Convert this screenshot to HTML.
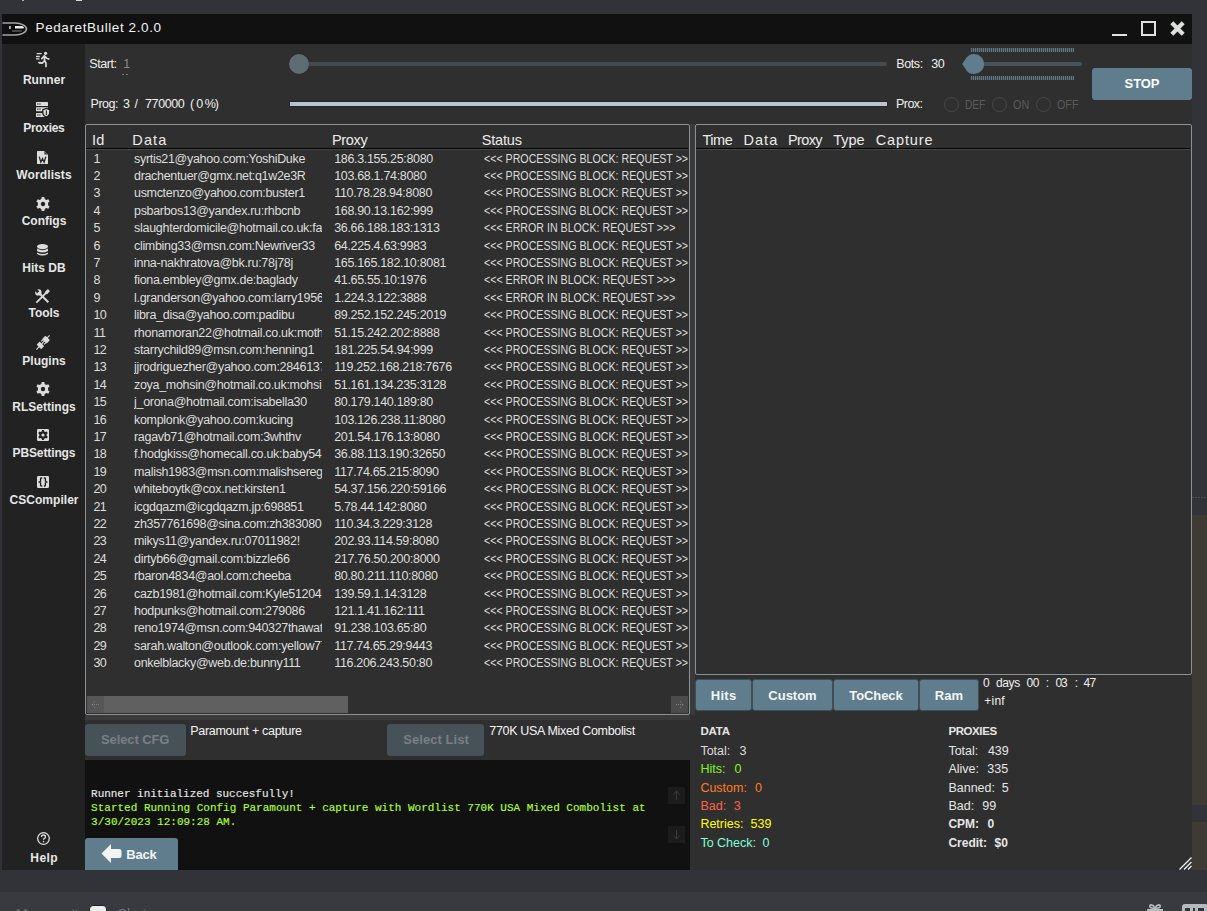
<!DOCTYPE html>
<html><head><meta charset="utf-8"><style>
html,body{margin:0;padding:0}
body{width:1207px;height:911px;overflow:hidden;position:relative;background:#313338;font-family:'Liberation Sans', sans-serif}
</style></head><body>
<div style="position:absolute;left:0px;top:892px;width:1207px;height:19px;z-index:1;background:#383a40"></div>
<div style="position:absolute;left:1192px;top:515px;width:15px;height:290px;z-index:1;background:#3f3b34"></div>
<div style="position:absolute;left:1192px;top:822px;width:15px;height:48px;z-index:1;background:#3f3b34"></div>
<div style="position:absolute;left:2px;top:14px;width:1190px;height:30px;z-index:1;background:#111111"></div>
<div style="position:absolute;left:2px;top:44px;width:83px;height:826px;z-index:1;background:#222222"></div>
<div style="position:absolute;left:85px;top:44px;width:1107px;height:826px;z-index:1;background:#2f2f2f"></div>
<svg style="position:absolute;left:2px;top:19px;z-index:3" width="26" height="20" viewBox="0 0 26 20">
<path d="M8 5.5 L15 5.5 C19.5 5.5 22 8 22 10 C22 12 19.5 14.5 15 14.5 L8 14.5 Z" fill="#0c0c0c"/>
<path d="M10 11 L19 11 C20 11 20.5 12 19.5 12.8 L10 13 Z" fill="#4a4a4a"/>
<path d="M13 7 L20 7 C21.5 7 22 8 21.8 9.6 L13 9.6 Z" fill="#e6e6e6"/>
<rect x="7.2" y="7" width="1.5" height="3" fill="#dddddd"/>
<path d="M0.5 4 L13 4 C19.5 4 24.5 7 24.5 10 C24.5 13 19.5 16 13 16 L0.5 16" fill="none" stroke="#a4a4a4" stroke-width="1.6"/>
</svg>
<div style="position:absolute;left:1112px;top:34px;width:15px;height:2px;z-index:1;background:#dfe2df"></div>
<div style="position:absolute;left:1141px;top:21px;width:15px;height:15px;z-index:1;box-sizing:border-box;border:2px solid #dfe2df"></div>
<svg style="position:absolute;left:1169px;top:20px;z-index:3" width="17" height="17" viewBox="0 0 17 17"><path d="M2.8 2.8 L14.2 14.2 M14.2 2.8 L2.8 14.2" stroke="#dcdfdc" stroke-width="4.2"/></svg>
<svg style="position:absolute;left:36px;top:51px;z-index:3" width="14" height="17" viewBox="0 0 14 17"><g fill="none" stroke="#dcdcdc" stroke-width="1.7" stroke-linecap="round" stroke-linejoin="round"><circle cx="9.6" cy="2.3" r="1.6" fill="#dcdcdc" stroke="none"/><path d="M8.4 5 L8.6 10"/><path d="M8.2 5.2 L5.8 7.6"/><path d="M8.6 5.2 L10.6 7.2 L12.8 8"/><path d="M8.4 10 L6.2 12.2 L3.6 11.8"/><path d="M8.6 10 L10 12 L10 15.4"/><path d="M1.2 2.6 L5.2 2.6 M0.6 5.5 L3.2 5.5 M0.4 7.9 L3 7.9 M2.8 11.5 L4.6 11.5" stroke-width="1.4"/></g></svg>
<svg style="position:absolute;left:36px;top:101px;z-index:3" width="15" height="17" viewBox="0 0 15 17"><g fill="#dcdcdc"><rect x="0" y="1" width="12" height="4" rx="0.6"/><rect x="0" y="6.2" width="12" height="4" rx="0.6"/><rect x="0" y="12" width="12" height="4" rx="0.6"/></g><g fill="#555"><rect x="1.2" y="2.2" width="1.3" height="1.6"/><rect x="3.3" y="2.2" width="1.3" height="1.6"/><rect x="1.2" y="7.4" width="1.3" height="1.6"/><rect x="3.3" y="7.4" width="1.3" height="1.6"/><rect x="1.2" y="13.2" width="1.3" height="1.6"/><rect x="3.3" y="13.2" width="1.3" height="1.6"/></g><path d="M10.3 7.4 L13.8 8.7 L13.8 11.6 C13.8 13.8 12.3 15.3 10.3 16.1 C8.3 15.3 6.8 13.8 6.8 11.6 L6.8 8.7 Z" fill="#dcdcdc" stroke="#1a1a1a" stroke-width="1.3"/><rect x="9.8" y="9.4" width="1.1" height="4.6" fill="#222"/></svg>
<svg style="position:absolute;left:37px;top:151px;z-index:3" width="11" height="13" viewBox="0 0 11 13"><path d="M0.6 0 L7 0 L11 4 L11 12.4 Q11 13 10.4 13 L0.6 13 Q0 13 0 12.4 L0 0.6 Q0 0 0.6 0 Z" fill="#dcdcdc"/><path d="M7.4 0.6 L7.4 3.6 L10.4 3.6 Z" fill="#3a3a3a"/><path d="M2.2 5.6 L3.9 11.2 L5.5 7.6 L7.1 11.2 L8.8 5.6" fill="none" stroke="#262626" stroke-width="1.3"/></svg>
<svg style="position:absolute;left:36px;top:197px;z-index:3" width="14" height="14" viewBox="0 0 14 14"><g transform="translate(7,7)"><path fill="#dcdcdc" d="M-1.3 -7 L1.3 -7 L1.7 -4.9 A5 5 0 0 1 3.3 -4 L5.3 -4.8 L6.6 -2.6 L5 -1.2 A5 5 0 0 1 5 1.2 L6.6 2.6 L5.3 4.8 L3.3 4 A5 5 0 0 1 1.7 4.9 L1.3 7 L-1.3 7 L-1.7 4.9 A5 5 0 0 1 -3.3 4 L-5.3 4.8 L-6.6 2.6 L-5 1.2 A5 5 0 0 1 -5 -1.2 L-6.6 -2.6 L-5.3 -4.8 L-3.3 -4 A5 5 0 0 1 -1.7 -4.9 Z"/><circle r="2.2" fill="#222"/></g></svg>
<svg style="position:absolute;left:37px;top:244px;z-index:3" width="11" height="13" viewBox="0 0 11 13"><g fill="#dcdcdc"><ellipse cx="5.5" cy="2.6" rx="5.5" ry="2.6"/><path d="M0 4.6 Q5.5 7.8 11 4.6 L11 7 Q5.5 10.2 0 7 Z"/><path d="M0 8.4 Q5.5 11.6 11 8.4 L11 10 Q5.5 13.2 0 10 Z"/></g></svg>
<svg style="position:absolute;left:35px;top:289px;z-index:3" width="15" height="15" viewBox="0 0 15 15"><g fill="#dcdcdc"><path d="M4.6 6 L12.6 14 L14 12.6 L6 4.6 Z"/><circle cx="3.4" cy="3.4" r="3.2"/><path d="M9.6 3.2 L12.2 0.6 Q12.8 0 13.4 0.6 L14.4 1.6 Q15 2.2 14.4 2.8 L11.8 5.4 Z"/><path d="M10.8 4.2 L1.4 13.6" stroke="#dcdcdc" stroke-width="1.8"/></g><path d="M-0.5 1.5 L1.5 -0.5 L4.2 2.2 L2.2 4.2 Z" fill="#222"/></svg>
<svg style="position:absolute;left:36px;top:335px;z-index:3" width="14" height="15" viewBox="0 0 14 15"><g fill="#dcdcdc"><path d="M0.4 14.6 L13.6 0.4" stroke="#dcdcdc" stroke-width="1.1"/><rect x="-2.4" y="-3.2" width="4.8" height="6.4" rx="0.9" transform="translate(10,4.6) rotate(-45)"/><rect x="-2.2" y="-3.2" width="4.4" height="6.4" rx="0.6" transform="translate(4.4,10.4) rotate(-45)"/><path d="M5.2 6.4 L7 4.6 M8 9.4 L9.8 7.6" stroke="#dcdcdc" stroke-width="1.2"/></g></svg>
<svg style="position:absolute;left:36px;top:382px;z-index:3" width="14" height="14" viewBox="0 0 14 14"><g transform="translate(7,7)"><path fill="#dcdcdc" d="M-1.3 -7 L1.3 -7 L1.7 -4.9 A5 5 0 0 1 3.3 -4 L5.3 -4.8 L6.6 -2.6 L5 -1.2 A5 5 0 0 1 5 1.2 L6.6 2.6 L5.3 4.8 L3.3 4 A5 5 0 0 1 1.7 4.9 L1.3 7 L-1.3 7 L-1.7 4.9 A5 5 0 0 1 -3.3 4 L-5.3 4.8 L-6.6 2.6 L-5 1.2 A5 5 0 0 1 -5 -1.2 L-6.6 -2.6 L-5.3 -4.8 L-3.3 -4 A5 5 0 0 1 -1.7 -4.9 Z"/><circle r="2.2" fill="#222"/></g></svg>
<svg style="position:absolute;left:37px;top:429px;z-index:3" width="12" height="12" viewBox="0 0 12 12"><rect x="0" y="0" width="12" height="12" rx="1.2" fill="#dcdcdc"/><g transform="translate(6,6) scale(0.72)"><path fill="#222" d="M-1.3 -7 L1.3 -7 L1.7 -4.9 A5 5 0 0 1 3.3 -4 L5.3 -4.8 L6.6 -2.6 L5 -1.2 A5 5 0 0 1 5 1.2 L6.6 2.6 L5.3 4.8 L3.3 4 A5 5 0 0 1 1.7 4.9 L1.3 7 L-1.3 7 L-1.7 4.9 A5 5 0 0 1 -3.3 4 L-5.3 4.8 L-6.6 2.6 L-5 1.2 A5 5 0 0 1 -5 -1.2 L-6.6 -2.6 L-5.3 -4.8 L-3.3 -4 A5 5 0 0 1 -1.7 -4.9 Z"/><circle r="2.2" fill="#dcdcdc"/></g></svg>
<svg style="position:absolute;left:37px;top:476px;z-index:3" width="12" height="12" viewBox="0 0 12 12"><rect x="0" y="0" width="12" height="12" rx="1.2" fill="#dcdcdc"/><path d="M5.2 2 L4.4 2 Q3.6 2 3.6 2.8 L3.6 5.2 L2.2 6 L3.6 6.8 L3.6 9.2 Q3.6 10 4.4 10 L5.2 10 M6.8 2 L7.6 2 Q8.4 2 8.4 2.8 L8.4 5.2 L9.8 6 L8.4 6.8 L8.4 9.2 Q8.4 10 7.6 10 L6.8 10" fill="none" stroke="#1a1a1a" stroke-width="1.3"/></svg>
<svg style="position:absolute;left:37px;top:832px;z-index:3" width="13" height="13" viewBox="0 0 13 13"><circle cx="6.5" cy="6.5" r="5.8" fill="none" stroke="#dcdcdc" stroke-width="1.3"/><path d="M4.5 5 Q4.5 3 6.5 3 Q8.5 3 8.5 4.8 Q8.5 6 7 6.6 Q6.5 6.9 6.5 7.8" fill="none" stroke="#dcdcdc" stroke-width="1.3"/><circle cx="6.5" cy="9.6" r="0.8" fill="#dcdcdc"/></svg>
<div style="position:absolute;left:122px;top:74px;width:2px;height:1px;z-index:1;background:#777"></div>
<div style="position:absolute;left:126px;top:74px;width:2px;height:1px;z-index:1;background:#777"></div>
<div style="position:absolute;left:299px;top:62px;width:588px;height:4px;z-index:1;background:#444a4e;border-radius:0 2px 2px 0"></div>
<div style="position:absolute;left:289px;top:54px;width:20px;height:20px;z-index:2;background:#5f6c74;border-radius:50%;box-shadow:0 0 1px #222"></div>
<div style="position:absolute;left:290px;top:102px;width:597px;height:4px;z-index:1;background:#b6c5cc;box-shadow:0 0 0 0.5px #1f1f1f"></div>
<div style="position:absolute;left:963px;top:62px;width:119px;height:4px;z-index:1;background:#47535a;border-radius:2px"></div>
<svg style="position:absolute;left:960px;top:53px;z-index:2" width="26" height="22" viewBox="0 0 26 22"><path d="M14.2 1 A10 10 0 1 1 14.2 21 A10 10 0 0 1 5.2 15.4 L2.2 11 L5.2 6.6 A10 10 0 0 1 14.2 1 Z" fill="#5f7d8c"/></svg>
<div style="position:absolute;left:971px;top:48px;width:103px;height:4px;z-index:1;background:repeating-linear-gradient(90deg,#5f7a88 0 1px,#3a4145 1px 2px)"></div>
<div style="position:absolute;left:971px;top:76px;width:103px;height:4px;z-index:1;background:repeating-linear-gradient(90deg,#5f7a88 0 1px,#3a4145 1px 2px)"></div>
<div style="position:absolute;left:944px;top:97px;width:15px;height:15px;z-index:1;box-sizing:border-box;border:1px solid #474747;border-radius:50%"></div>
<div style="position:absolute;left:992px;top:97px;width:15px;height:15px;z-index:1;box-sizing:border-box;border:1px solid #474747;border-radius:50%"></div>
<div style="position:absolute;left:1036px;top:97px;width:15px;height:15px;z-index:1;box-sizing:border-box;border:1px solid #474747;border-radius:50%"></div>
<div style="position:absolute;left:1092px;top:68px;width:100px;height:32px;z-index:1;background:#5f7d8c;border-radius:3px"></div>
<div style="position:absolute;left:85px;top:124px;width:605px;height:591px;z-index:1;box-sizing:border-box;border:1px solid #8b9197;border-radius:2px"></div>
<div style="position:absolute;left:690px;top:124px;width:5px;height:591px;z-index:1;background:#3a3a3a"></div>
<div style="position:absolute;left:85px;top:715px;width:605px;height:5px;z-index:1;background:#3a3a3a"></div>
<div style="position:absolute;left:86px;top:148px;width:602px;height:1px;z-index:1;background:#000"></div>
<div style="position:absolute;left:86px;top:149px;width:602px;height:1px;z-index:1;background:#474747"></div>
<div style="position:absolute;left:87px;top:696px;width:601px;height:17px;z-index:1;background:#2f2f2f"></div>
<div style="position:absolute;left:87px;top:696px;width:17px;height:17px;z-index:1;background:#565656"></div>
<div style="position:absolute;left:104px;top:696px;width:244px;height:17px;z-index:1;background:#606060"></div>
<div style="position:absolute;left:671px;top:696px;width:17px;height:17px;z-index:1;background:#4b4b4b"></div>
<svg style="position:absolute;left:89px;top:699px;z-index:4" width="13" height="11" viewBox="0 0 13 11"><path d="M6 2 L3 5.5 L6 9 M3 5.5 L10 5.5" fill="none" stroke="#8a8a8a" stroke-width="0.8" stroke-dasharray="1 1"/></svg>
<svg style="position:absolute;left:673px;top:699px;z-index:4" width="13" height="11" viewBox="0 0 13 11"><path d="M7 2 L10 5.5 L7 9 M10 5.5 L3 5.5" fill="none" stroke="#8a8a8a" stroke-width="0.8" stroke-dasharray="1 1"/></svg>
<div style="position:absolute;left:85px;top:724px;width:101px;height:32px;z-index:1;background:#465258;border-radius:3px"></div>
<div style="position:absolute;left:387px;top:724px;width:97px;height:32px;z-index:1;background:#465258;border-radius:3px"></div>
<div style="position:absolute;left:85px;top:760px;width:605px;height:110px;z-index:1;background:#111111"></div>
<div style="position:absolute;left:668px;top:787px;width:17px;height:17px;z-index:1;background:#1c1c1c"></div>
<div style="position:absolute;left:668px;top:826px;width:17px;height:17px;z-index:1;background:#1c1c1c"></div>
<svg style="position:absolute;left:668px;top:787px;z-index:4" width="17" height="17" viewBox="0 0 17 17"><path d="M8.5 4 L5.5 7.5 M8.5 4 L11.5 7.5 M8.5 4 L8.5 13" stroke="#3a3a3a" stroke-width="1"/></svg>
<svg style="position:absolute;left:668px;top:826px;z-index:4" width="17" height="17" viewBox="0 0 17 17"><path d="M8.5 13 L5.5 9.5 M8.5 13 L11.5 9.5 M8.5 13 L8.5 4" stroke="#3a3a3a" stroke-width="1"/></svg>
<div style="position:absolute;left:85px;top:838px;width:93px;height:32px;z-index:1;background:#5f7d8c;border-radius:3px 3px 0 0"></div>
<svg style="position:absolute;left:101px;top:843px;z-index:4" width="21" height="21" viewBox="0 0 21 21"><path d="M0.5 10.5 L10 1 L10 6 L18 6 Q20.5 6 20.5 8.5 L20.5 12.5 Q20.5 15 18 15 L10 15 L10 20 Z" fill="#f2f4f4"/></svg>
<div style="position:absolute;left:695px;top:124px;width:497px;height:551px;z-index:1;box-sizing:border-box;border:1px solid #8b9197;border-radius:2px"></div>
<div style="position:absolute;left:696px;top:148px;width:494px;height:1px;z-index:1;background:#000"></div>
<div style="position:absolute;left:696px;top:149px;width:494px;height:1px;z-index:1;background:#474747"></div>
<div style="position:absolute;left:695px;top:679px;width:57px;height:32px;z-index:1;box-sizing:border-box;background:#5f7d8c;border-radius:3px;border:1px solid #3e4f57"></div>
<div style="position:absolute;left:752px;top:679px;width:81px;height:32px;z-index:1;box-sizing:border-box;background:#5f7d8c;border-radius:3px;border:1px solid #3e4f57"></div>
<div style="position:absolute;left:833px;top:679px;width:86px;height:32px;z-index:1;box-sizing:border-box;background:#5f7d8c;border-radius:3px;border:1px solid #3e4f57"></div>
<div style="position:absolute;left:919px;top:679px;width:60px;height:32px;z-index:1;box-sizing:border-box;background:#5f7d8c;border-radius:3px;border:1px solid #3e4f57"></div>
<svg style="position:absolute;left:1178px;top:856px;z-index:4" width="14" height="14" viewBox="0 0 14 14"><path d="M13.5 1.5 L1.5 13.5 M13.5 6 L6 13.5 M13.5 10 L10 13.5" stroke="#f0f0f0" stroke-width="1.3"/></svg>
<div style="position:absolute;left:89px;top:905px;width:18px;height:12px;z-index:2;box-sizing:border-box;background:#ebedef;border:1px solid #1e1f22;border-radius:4px"></div>
<svg style="position:absolute;left:1146px;top:904px;z-index:2" width="18" height="9" viewBox="0 0 18 9"><path d="M9 4 C7 0 3 0 4 3 C5 4.5 8 4.5 9 4 C10 4.5 13 4.5 14 3 C15 0 11 0 9 4 Z" fill="none" stroke="#b5bac1" stroke-width="1.6"/><rect x="1" y="5" width="16" height="4" fill="#b5bac1"/></svg>
<div style="position:absolute;left:1182px;top:904px;width:26px;height:10px;z-index:2;background:#b5bac1;border-radius:3px"></div>
<div style="position:absolute;left:1185px;top:908px;width:5px;height:4px;z-index:3;background:#313338"></div>
<div style="position:absolute;left:1193px;top:908px;width:2px;height:4px;z-index:3;background:#313338"></div>
<div style="position:absolute;left:1198px;top:908px;width:6px;height:4px;z-index:3;background:#313338"></div>
<div style="position:absolute;left:1192px;top:497px;width:15px;height:1px;z-index:1;background:repeating-linear-gradient(90deg,#4a4c52 0 2px,transparent 2px 3px)"></div>
<div style="position:absolute;left:22px;top:0px;width:2px;height:1px;z-index:1;background:#9fb4c8"></div>
<div style="position:absolute;left:76px;top:0px;width:6px;height:1px;z-index:1;background:#d8d8d8"></div>
<div style="position:absolute;left:35.60px;top:20.84px;z-index:5;font-family:'Liberation Sans', sans-serif;font-size:13.5px;line-height:13.5px;font-weight:normal;color:#f2f2f2;white-space:pre;letter-spacing:0.586px">PedaretBullet 2.0.0</div>
<div style="position:absolute;left:22.90px;top:74.28px;z-index:5;font-family:'Liberation Sans', sans-serif;font-size:12px;line-height:12px;font-weight:bold;color:#e6e6e6;white-space:pre;letter-spacing:0.040px">Runner</div>
<div style="position:absolute;left:23.20px;top:121.68px;z-index:5;font-family:'Liberation Sans', sans-serif;font-size:12px;line-height:12px;font-weight:bold;color:#e6e6e6;white-space:pre;letter-spacing:-0.293px">Proxies</div>
<div style="position:absolute;left:16.35px;top:169.38px;z-index:5;font-family:'Liberation Sans', sans-serif;font-size:12px;line-height:12px;font-weight:bold;color:#e6e6e6;white-space:pre;letter-spacing:0.106px">Wordlists</div>
<div style="position:absolute;left:21.66px;top:215.48px;z-index:5;font-family:'Liberation Sans', sans-serif;font-size:12px;line-height:12px;font-weight:bold;color:#e6e6e6;white-space:pre">Configs</div>
<div style="position:absolute;left:22.33px;top:261.58px;z-index:5;font-family:'Liberation Sans', sans-serif;font-size:12px;line-height:12px;font-weight:bold;color:#e6e6e6;white-space:pre">Hits DB</div>
<div style="position:absolute;left:28.45px;top:307.08px;z-index:5;font-family:'Liberation Sans', sans-serif;font-size:12px;line-height:12px;font-weight:bold;color:#e6e6e6;white-space:pre">Tools</div>
<div style="position:absolute;left:22.33px;top:354.68px;z-index:5;font-family:'Liberation Sans', sans-serif;font-size:12px;line-height:12px;font-weight:bold;color:#e6e6e6;white-space:pre">Plugins</div>
<div style="position:absolute;left:12.33px;top:400.78px;z-index:5;font-family:'Liberation Sans', sans-serif;font-size:12px;line-height:12px;font-weight:bold;color:#e6e6e6;white-space:pre">RLSettings</div>
<div style="position:absolute;left:12.50px;top:446.68px;z-index:5;font-family:'Liberation Sans', sans-serif;font-size:12px;line-height:12px;font-weight:bold;color:#e6e6e6;white-space:pre;letter-spacing:-0.113px">PBSettings</div>
<div style="position:absolute;left:9.45px;top:493.58px;z-index:5;font-family:'Liberation Sans', sans-serif;font-size:12px;line-height:12px;font-weight:bold;color:#e6e6e6;white-space:pre;letter-spacing:0.046px">CSCompiler</div>
<div style="position:absolute;left:30.35px;top:851.88px;z-index:5;font-family:'Liberation Sans', sans-serif;font-size:12px;line-height:12px;font-weight:bold;color:#e6e6e6;white-space:pre;letter-spacing:0.428px">Help</div>
<div style="position:absolute;left:89.30px;top:57.70px;z-index:5;font-family:'Liberation Sans', sans-serif;font-size:12.5px;line-height:12.5px;font-weight:normal;color:#f0f0f0;white-space:pre;letter-spacing:-0.415px">Start:</div>
<div style="position:absolute;left:123.20px;top:57.70px;z-index:5;font-family:'Liberation Sans', sans-serif;font-size:12.5px;line-height:12.5px;font-weight:normal;color:#8a8a8a;white-space:pre">1</div>
<div style="position:absolute;left:90.60px;top:97.50px;z-index:5;font-family:'Liberation Sans', sans-serif;font-size:12.5px;line-height:12.5px;font-weight:normal;color:#f0f0f0;white-space:pre;letter-spacing:-0.498px">Prog:</div>
<div style="position:absolute;left:123.00px;top:97.50px;z-index:5;font-family:'Liberation Sans', sans-serif;font-size:12.5px;line-height:12.5px;font-weight:normal;color:#f0f0f0;white-space:pre">3</div>
<div style="position:absolute;left:134.40px;top:97.50px;z-index:5;font-family:'Liberation Sans', sans-serif;font-size:12.5px;line-height:12.5px;font-weight:normal;color:#f0f0f0;white-space:pre">/</div>
<div style="position:absolute;left:145.00px;top:97.50px;z-index:5;font-family:'Liberation Sans', sans-serif;font-size:12.5px;line-height:12.5px;font-weight:normal;color:#f0f0f0;white-space:pre;letter-spacing:-0.384px">770000</div>
<div style="position:absolute;left:190.00px;top:97.50px;z-index:5;font-family:'Liberation Sans', sans-serif;font-size:12.5px;line-height:12.5px;font-weight:normal;color:#f0f0f0;white-space:pre">(</div>
<div style="position:absolute;left:196.20px;top:97.50px;z-index:5;font-family:'Liberation Sans', sans-serif;font-size:12.5px;line-height:12.5px;font-weight:normal;color:#f0f0f0;white-space:pre">0</div>
<div style="position:absolute;left:204.70px;top:97.50px;z-index:5;font-family:'Liberation Sans', sans-serif;font-size:12.5px;line-height:12.5px;font-weight:normal;color:#f0f0f0;white-space:pre">%</div>
<div style="position:absolute;left:214.70px;top:97.50px;z-index:5;font-family:'Liberation Sans', sans-serif;font-size:12.5px;line-height:12.5px;font-weight:normal;color:#f0f0f0;white-space:pre">)</div>
<div style="position:absolute;left:896.20px;top:57.70px;z-index:5;font-family:'Liberation Sans', sans-serif;font-size:12.5px;line-height:12.5px;font-weight:normal;color:#f0f0f0;white-space:pre;letter-spacing:-0.375px">Bots:</div>
<div style="position:absolute;left:931.30px;top:57.70px;z-index:5;font-family:'Liberation Sans', sans-serif;font-size:12.5px;line-height:12.5px;font-weight:normal;color:#f0f0f0;white-space:pre;letter-spacing:-0.506px">30</div>
<div style="position:absolute;left:896.00px;top:97.80px;z-index:5;font-family:'Liberation Sans', sans-serif;font-size:12.5px;line-height:12.5px;font-weight:normal;color:#f0f0f0;white-space:pre;letter-spacing:-0.547px">Prox:</div>
<div style="position:absolute;left:965.00px;top:99.10px;z-index:5;font-family:'Liberation Sans', sans-serif;font-size:12.5px;line-height:12.5px;font-weight:normal;color:#5a5a5a;white-space:pre;transform:scaleX(0.8120);transform-origin:0 0">DEF</div>
<div style="position:absolute;left:1012.80px;top:99.10px;z-index:5;font-family:'Liberation Sans', sans-serif;font-size:12.5px;line-height:12.5px;font-weight:normal;color:#5a5a5a;white-space:pre;transform:scaleX(0.8640);transform-origin:0 0">ON</div>
<div style="position:absolute;left:1056.50px;top:99.10px;z-index:5;font-family:'Liberation Sans', sans-serif;font-size:12.5px;line-height:12.5px;font-weight:normal;color:#5a5a5a;white-space:pre;transform:scaleX(0.8600);transform-origin:0 0">OFF</div>
<div style="position:absolute;left:1124.60px;top:77.02px;z-index:5;font-family:'Liberation Sans', sans-serif;font-size:13px;line-height:13px;font-weight:bold;color:#ffffff;white-space:pre;letter-spacing:-0.124px">STOP</div>
<div style="position:absolute;left:91.90px;top:133.38px;z-index:5;font-family:'Liberation Sans', sans-serif;font-size:14.5px;line-height:14.5px;font-weight:normal;color:#ececec;white-space:pre;letter-spacing:0.406px">Id</div>
<div style="position:absolute;left:132.30px;top:133.38px;z-index:5;font-family:'Liberation Sans', sans-serif;font-size:14.5px;line-height:14.5px;font-weight:normal;color:#ececec;white-space:pre;letter-spacing:1.120px">Data</div>
<div style="position:absolute;left:332.00px;top:133.38px;z-index:5;font-family:'Liberation Sans', sans-serif;font-size:14.5px;line-height:14.5px;font-weight:normal;color:#ececec;white-space:pre;letter-spacing:-0.320px">Proxy</div>
<div style="position:absolute;left:481.70px;top:133.38px;z-index:5;font-family:'Liberation Sans', sans-serif;font-size:14.5px;line-height:14.5px;font-weight:normal;color:#ececec;white-space:pre;letter-spacing:-0.162px">Status</div>
<div style="position:absolute;left:93.50px;top:152.60px;z-index:5;font-family:'Liberation Sans', sans-serif;font-size:12.5px;line-height:12.5px;font-weight:normal;color:#dedede;white-space:pre">1</div>
<div style="position:absolute;left:134.00px;top:152.60px;width:188.00px;height:17.5px;overflow:hidden;z-index:5"><div style="font-family:'Liberation Sans', sans-serif;font-size:12.5px;line-height:12.5px;font-weight:normal;color:#dedede;white-space:pre;letter-spacing:-0.306px">syrtis21@yahoo.com:YoshiDuke</div></div>
<div style="position:absolute;left:334.20px;top:152.60px;z-index:5;font-family:'Liberation Sans', sans-serif;font-size:12.5px;line-height:12.5px;font-weight:normal;color:#dedede;white-space:pre;letter-spacing:-0.326px">186.3.155.25:8080</div>
<div style="position:absolute;left:484.40px;top:152.60px;width:204.10px;height:17.5px;overflow:hidden;z-index:5"><div style="font-family:'Liberation Sans', sans-serif;font-size:12.5px;line-height:12.5px;font-weight:normal;color:#dedede;white-space:pre;transform:scaleX(0.8510);transform-origin:0 0">&lt;&lt;&lt; PROCESSING BLOCK: REQUEST &gt;&gt;&gt;</div></div>
<div style="position:absolute;left:93.50px;top:169.60px;z-index:5;font-family:'Liberation Sans', sans-serif;font-size:12.5px;line-height:12.5px;font-weight:normal;color:#dedede;white-space:pre">2</div>
<div style="position:absolute;left:134.00px;top:169.60px;width:188.00px;height:17.5px;overflow:hidden;z-index:5"><div style="font-family:'Liberation Sans', sans-serif;font-size:12.5px;line-height:12.5px;font-weight:normal;color:#dedede;white-space:pre;letter-spacing:-0.319px">drachentuer@gmx.net:q1w2e3R</div></div>
<div style="position:absolute;left:334.20px;top:169.60px;z-index:5;font-family:'Liberation Sans', sans-serif;font-size:12.5px;line-height:12.5px;font-weight:normal;color:#dedede;white-space:pre;letter-spacing:-0.324px">103.68.1.74:8080</div>
<div style="position:absolute;left:484.40px;top:169.60px;width:204.10px;height:17.5px;overflow:hidden;z-index:5"><div style="font-family:'Liberation Sans', sans-serif;font-size:12.5px;line-height:12.5px;font-weight:normal;color:#dedede;white-space:pre;transform:scaleX(0.8510);transform-origin:0 0">&lt;&lt;&lt; PROCESSING BLOCK: REQUEST &gt;&gt;&gt;</div></div>
<div style="position:absolute;left:93.50px;top:186.60px;z-index:5;font-family:'Liberation Sans', sans-serif;font-size:12.5px;line-height:12.5px;font-weight:normal;color:#dedede;white-space:pre">3</div>
<div style="position:absolute;left:134.00px;top:186.60px;width:188.00px;height:17.5px;overflow:hidden;z-index:5"><div style="font-family:'Liberation Sans', sans-serif;font-size:12.5px;line-height:12.5px;font-weight:normal;color:#dedede;white-space:pre;letter-spacing:-0.317px">usmctenzo@yahoo.com:buster1</div></div>
<div style="position:absolute;left:334.20px;top:186.60px;z-index:5;font-family:'Liberation Sans', sans-serif;font-size:12.5px;line-height:12.5px;font-weight:normal;color:#dedede;white-space:pre;letter-spacing:-0.323px">110.78.28.94:8080</div>
<div style="position:absolute;left:484.40px;top:186.60px;width:204.10px;height:17.5px;overflow:hidden;z-index:5"><div style="font-family:'Liberation Sans', sans-serif;font-size:12.5px;line-height:12.5px;font-weight:normal;color:#dedede;white-space:pre;transform:scaleX(0.8510);transform-origin:0 0">&lt;&lt;&lt; PROCESSING BLOCK: REQUEST &gt;&gt;&gt;</div></div>
<div style="position:absolute;left:93.50px;top:204.60px;z-index:5;font-family:'Liberation Sans', sans-serif;font-size:12.5px;line-height:12.5px;font-weight:normal;color:#dedede;white-space:pre">4</div>
<div style="position:absolute;left:134.00px;top:204.60px;width:188.00px;height:17.5px;overflow:hidden;z-index:5"><div style="font-family:'Liberation Sans', sans-serif;font-size:12.5px;line-height:12.5px;font-weight:normal;color:#dedede;white-space:pre;letter-spacing:-0.309px">psbarbos13@yandex.ru:rhbcnb</div></div>
<div style="position:absolute;left:334.20px;top:204.60px;z-index:5;font-family:'Liberation Sans', sans-serif;font-size:12.5px;line-height:12.5px;font-weight:normal;color:#dedede;white-space:pre;letter-spacing:-0.326px">168.90.13.162:999</div>
<div style="position:absolute;left:484.40px;top:204.60px;width:204.10px;height:17.5px;overflow:hidden;z-index:5"><div style="font-family:'Liberation Sans', sans-serif;font-size:12.5px;line-height:12.5px;font-weight:normal;color:#dedede;white-space:pre;transform:scaleX(0.8510);transform-origin:0 0">&lt;&lt;&lt; PROCESSING BLOCK: REQUEST &gt;&gt;&gt;</div></div>
<div style="position:absolute;left:93.50px;top:221.60px;z-index:5;font-family:'Liberation Sans', sans-serif;font-size:12.5px;line-height:12.5px;font-weight:normal;color:#dedede;white-space:pre">5</div>
<div style="position:absolute;left:134.00px;top:221.60px;width:188.00px;height:17.5px;overflow:hidden;z-index:5"><div style="font-family:'Liberation Sans', sans-serif;font-size:12.5px;line-height:12.5px;font-weight:normal;color:#dedede;white-space:pre;letter-spacing:-0.275px">slaughterdomicile@hotmail.co.uk:fa</div></div>
<div style="position:absolute;left:334.20px;top:221.60px;z-index:5;font-family:'Liberation Sans', sans-serif;font-size:12.5px;line-height:12.5px;font-weight:normal;color:#dedede;white-space:pre;letter-spacing:-0.327px">36.66.188.183:1313</div>
<div style="position:absolute;left:484.40px;top:221.60px;width:204.10px;height:17.5px;overflow:hidden;z-index:5"><div style="font-family:'Liberation Sans', sans-serif;font-size:12.5px;line-height:12.5px;font-weight:normal;color:#dedede;white-space:pre;transform:scaleX(0.8510);transform-origin:0 0">&lt;&lt;&lt; ERROR IN BLOCK: REQUEST &gt;&gt;&gt;</div></div>
<div style="position:absolute;left:93.50px;top:239.60px;z-index:5;font-family:'Liberation Sans', sans-serif;font-size:12.5px;line-height:12.5px;font-weight:normal;color:#dedede;white-space:pre">6</div>
<div style="position:absolute;left:134.00px;top:239.60px;width:188.00px;height:17.5px;overflow:hidden;z-index:5"><div style="font-family:'Liberation Sans', sans-serif;font-size:12.5px;line-height:12.5px;font-weight:normal;color:#dedede;white-space:pre;letter-spacing:-0.312px">climbing33@msn.com:Newriver33</div></div>
<div style="position:absolute;left:334.20px;top:239.60px;z-index:5;font-family:'Liberation Sans', sans-serif;font-size:12.5px;line-height:12.5px;font-weight:normal;color:#dedede;white-space:pre;letter-spacing:-0.324px">64.225.4.63:9983</div>
<div style="position:absolute;left:484.40px;top:239.60px;width:204.10px;height:17.5px;overflow:hidden;z-index:5"><div style="font-family:'Liberation Sans', sans-serif;font-size:12.5px;line-height:12.5px;font-weight:normal;color:#dedede;white-space:pre;transform:scaleX(0.8510);transform-origin:0 0">&lt;&lt;&lt; PROCESSING BLOCK: REQUEST &gt;&gt;&gt;</div></div>
<div style="position:absolute;left:93.50px;top:256.60px;z-index:5;font-family:'Liberation Sans', sans-serif;font-size:12.5px;line-height:12.5px;font-weight:normal;color:#dedede;white-space:pre">7</div>
<div style="position:absolute;left:134.00px;top:256.60px;width:188.00px;height:17.5px;overflow:hidden;z-index:5"><div style="font-family:'Liberation Sans', sans-serif;font-size:12.5px;line-height:12.5px;font-weight:normal;color:#dedede;white-space:pre;letter-spacing:-0.284px">inna-nakhratova@bk.ru:78j78j</div></div>
<div style="position:absolute;left:334.20px;top:256.60px;z-index:5;font-family:'Liberation Sans', sans-serif;font-size:12.5px;line-height:12.5px;font-weight:normal;color:#dedede;white-space:pre;letter-spacing:-0.328px">165.165.182.10:8081</div>
<div style="position:absolute;left:484.40px;top:256.60px;width:204.10px;height:17.5px;overflow:hidden;z-index:5"><div style="font-family:'Liberation Sans', sans-serif;font-size:12.5px;line-height:12.5px;font-weight:normal;color:#dedede;white-space:pre;transform:scaleX(0.8510);transform-origin:0 0">&lt;&lt;&lt; PROCESSING BLOCK: REQUEST &gt;&gt;&gt;</div></div>
<div style="position:absolute;left:93.50px;top:273.60px;z-index:5;font-family:'Liberation Sans', sans-serif;font-size:12.5px;line-height:12.5px;font-weight:normal;color:#dedede;white-space:pre">8</div>
<div style="position:absolute;left:134.00px;top:273.60px;width:188.00px;height:17.5px;overflow:hidden;z-index:5"><div style="font-family:'Liberation Sans', sans-serif;font-size:12.5px;line-height:12.5px;font-weight:normal;color:#dedede;white-space:pre;letter-spacing:-0.304px">fiona.embley@gmx.de:baglady</div></div>
<div style="position:absolute;left:334.20px;top:273.60px;z-index:5;font-family:'Liberation Sans', sans-serif;font-size:12.5px;line-height:12.5px;font-weight:normal;color:#dedede;white-space:pre;letter-spacing:-0.324px">41.65.55.10:1976</div>
<div style="position:absolute;left:484.40px;top:273.60px;width:204.10px;height:17.5px;overflow:hidden;z-index:5"><div style="font-family:'Liberation Sans', sans-serif;font-size:12.5px;line-height:12.5px;font-weight:normal;color:#dedede;white-space:pre;transform:scaleX(0.8510);transform-origin:0 0">&lt;&lt;&lt; ERROR IN BLOCK: REQUEST &gt;&gt;&gt;</div></div>
<div style="position:absolute;left:93.50px;top:291.60px;z-index:5;font-family:'Liberation Sans', sans-serif;font-size:12.5px;line-height:12.5px;font-weight:normal;color:#dedede;white-space:pre">9</div>
<div style="position:absolute;left:134.00px;top:291.60px;width:188.00px;height:17.5px;overflow:hidden;z-index:5"><div style="font-family:'Liberation Sans', sans-serif;font-size:12.5px;line-height:12.5px;font-weight:normal;color:#dedede;white-space:pre;letter-spacing:-0.295px">l.granderson@yahoo.com:larry1956</div></div>
<div style="position:absolute;left:334.20px;top:291.60px;z-index:5;font-family:'Liberation Sans', sans-serif;font-size:12.5px;line-height:12.5px;font-weight:normal;color:#dedede;white-space:pre;letter-spacing:-0.324px">1.224.3.122:3888</div>
<div style="position:absolute;left:484.40px;top:291.60px;width:204.10px;height:17.5px;overflow:hidden;z-index:5"><div style="font-family:'Liberation Sans', sans-serif;font-size:12.5px;line-height:12.5px;font-weight:normal;color:#dedede;white-space:pre;transform:scaleX(0.8510);transform-origin:0 0">&lt;&lt;&lt; ERROR IN BLOCK: REQUEST &gt;&gt;&gt;</div></div>
<div style="position:absolute;left:93.50px;top:308.60px;z-index:5;font-family:'Liberation Sans', sans-serif;font-size:12.5px;line-height:12.5px;font-weight:normal;color:#dedede;white-space:pre;letter-spacing:-0.695px">10</div>
<div style="position:absolute;left:134.00px;top:308.60px;width:188.00px;height:17.5px;overflow:hidden;z-index:5"><div style="font-family:'Liberation Sans', sans-serif;font-size:12.5px;line-height:12.5px;font-weight:normal;color:#dedede;white-space:pre;letter-spacing:-0.298px">libra_disa@yahoo.com:padibu</div></div>
<div style="position:absolute;left:334.20px;top:308.60px;z-index:5;font-family:'Liberation Sans', sans-serif;font-size:12.5px;line-height:12.5px;font-weight:normal;color:#dedede;white-space:pre;letter-spacing:-0.328px">89.252.152.245:2019</div>
<div style="position:absolute;left:484.40px;top:308.60px;width:204.10px;height:17.5px;overflow:hidden;z-index:5"><div style="font-family:'Liberation Sans', sans-serif;font-size:12.5px;line-height:12.5px;font-weight:normal;color:#dedede;white-space:pre;transform:scaleX(0.8510);transform-origin:0 0">&lt;&lt;&lt; PROCESSING BLOCK: REQUEST &gt;&gt;&gt;</div></div>
<div style="position:absolute;left:93.50px;top:326.60px;z-index:5;font-family:'Liberation Sans', sans-serif;font-size:12.5px;line-height:12.5px;font-weight:normal;color:#dedede;white-space:pre;letter-spacing:-0.649px">11</div>
<div style="position:absolute;left:134.00px;top:326.60px;width:188.00px;height:17.5px;overflow:hidden;z-index:5"><div style="font-family:'Liberation Sans', sans-serif;font-size:12.5px;line-height:12.5px;font-weight:normal;color:#dedede;white-space:pre;letter-spacing:-0.305px">rhonamoran22@hotmail.co.uk:mothe</div></div>
<div style="position:absolute;left:334.20px;top:326.60px;z-index:5;font-family:'Liberation Sans', sans-serif;font-size:12.5px;line-height:12.5px;font-weight:normal;color:#dedede;white-space:pre;letter-spacing:-0.327px">51.15.242.202:8888</div>
<div style="position:absolute;left:484.40px;top:326.60px;width:204.10px;height:17.5px;overflow:hidden;z-index:5"><div style="font-family:'Liberation Sans', sans-serif;font-size:12.5px;line-height:12.5px;font-weight:normal;color:#dedede;white-space:pre;transform:scaleX(0.8510);transform-origin:0 0">&lt;&lt;&lt; PROCESSING BLOCK: REQUEST &gt;&gt;&gt;</div></div>
<div style="position:absolute;left:93.50px;top:343.60px;z-index:5;font-family:'Liberation Sans', sans-serif;font-size:12.5px;line-height:12.5px;font-weight:normal;color:#dedede;white-space:pre;letter-spacing:-0.695px">12</div>
<div style="position:absolute;left:134.00px;top:343.60px;width:188.00px;height:17.5px;overflow:hidden;z-index:5"><div style="font-family:'Liberation Sans', sans-serif;font-size:12.5px;line-height:12.5px;font-weight:normal;color:#dedede;white-space:pre;letter-spacing:-0.300px">starrychild89@msn.com:henning1</div></div>
<div style="position:absolute;left:334.20px;top:343.60px;z-index:5;font-family:'Liberation Sans', sans-serif;font-size:12.5px;line-height:12.5px;font-weight:normal;color:#dedede;white-space:pre;letter-spacing:-0.326px">181.225.54.94:999</div>
<div style="position:absolute;left:484.40px;top:343.60px;width:204.10px;height:17.5px;overflow:hidden;z-index:5"><div style="font-family:'Liberation Sans', sans-serif;font-size:12.5px;line-height:12.5px;font-weight:normal;color:#dedede;white-space:pre;transform:scaleX(0.8510);transform-origin:0 0">&lt;&lt;&lt; PROCESSING BLOCK: REQUEST &gt;&gt;&gt;</div></div>
<div style="position:absolute;left:93.50px;top:360.60px;z-index:5;font-family:'Liberation Sans', sans-serif;font-size:12.5px;line-height:12.5px;font-weight:normal;color:#dedede;white-space:pre;letter-spacing:-0.695px">13</div>
<div style="position:absolute;left:134.00px;top:360.60px;width:188.00px;height:17.5px;overflow:hidden;z-index:5"><div style="font-family:'Liberation Sans', sans-serif;font-size:12.5px;line-height:12.5px;font-weight:normal;color:#dedede;white-space:pre;letter-spacing:-0.299px">jjrodriguezher@yahoo.com:2846137</div></div>
<div style="position:absolute;left:334.20px;top:360.60px;z-index:5;font-family:'Liberation Sans', sans-serif;font-size:12.5px;line-height:12.5px;font-weight:normal;color:#dedede;white-space:pre;letter-spacing:-0.327px">119.252.168.218:7676</div>
<div style="position:absolute;left:484.40px;top:360.60px;width:204.10px;height:17.5px;overflow:hidden;z-index:5"><div style="font-family:'Liberation Sans', sans-serif;font-size:12.5px;line-height:12.5px;font-weight:normal;color:#dedede;white-space:pre;transform:scaleX(0.8510);transform-origin:0 0">&lt;&lt;&lt; PROCESSING BLOCK: REQUEST &gt;&gt;&gt;</div></div>
<div style="position:absolute;left:93.50px;top:378.60px;z-index:5;font-family:'Liberation Sans', sans-serif;font-size:12.5px;line-height:12.5px;font-weight:normal;color:#dedede;white-space:pre;letter-spacing:-0.695px">14</div>
<div style="position:absolute;left:134.00px;top:378.60px;width:188.00px;height:17.5px;overflow:hidden;z-index:5"><div style="font-family:'Liberation Sans', sans-serif;font-size:12.5px;line-height:12.5px;font-weight:normal;color:#dedede;white-space:pre;letter-spacing:-0.302px">zoya_mohsin@hotmail.co.uk:mohsin</div></div>
<div style="position:absolute;left:334.20px;top:378.60px;z-index:5;font-family:'Liberation Sans', sans-serif;font-size:12.5px;line-height:12.5px;font-weight:normal;color:#dedede;white-space:pre;letter-spacing:-0.328px">51.161.134.235:3128</div>
<div style="position:absolute;left:484.40px;top:378.60px;width:204.10px;height:17.5px;overflow:hidden;z-index:5"><div style="font-family:'Liberation Sans', sans-serif;font-size:12.5px;line-height:12.5px;font-weight:normal;color:#dedede;white-space:pre;transform:scaleX(0.8510);transform-origin:0 0">&lt;&lt;&lt; PROCESSING BLOCK: REQUEST &gt;&gt;&gt;</div></div>
<div style="position:absolute;left:93.50px;top:395.60px;z-index:5;font-family:'Liberation Sans', sans-serif;font-size:12.5px;line-height:12.5px;font-weight:normal;color:#dedede;white-space:pre;letter-spacing:-0.695px">15</div>
<div style="position:absolute;left:134.00px;top:395.60px;width:188.00px;height:17.5px;overflow:hidden;z-index:5"><div style="font-family:'Liberation Sans', sans-serif;font-size:12.5px;line-height:12.5px;font-weight:normal;color:#dedede;white-space:pre;letter-spacing:-0.288px">j_orona@hotmail.com:isabella30</div></div>
<div style="position:absolute;left:334.20px;top:395.60px;z-index:5;font-family:'Liberation Sans', sans-serif;font-size:12.5px;line-height:12.5px;font-weight:normal;color:#dedede;white-space:pre;letter-spacing:-0.326px">80.179.140.189:80</div>
<div style="position:absolute;left:484.40px;top:395.60px;width:204.10px;height:17.5px;overflow:hidden;z-index:5"><div style="font-family:'Liberation Sans', sans-serif;font-size:12.5px;line-height:12.5px;font-weight:normal;color:#dedede;white-space:pre;transform:scaleX(0.8510);transform-origin:0 0">&lt;&lt;&lt; PROCESSING BLOCK: REQUEST &gt;&gt;&gt;</div></div>
<div style="position:absolute;left:93.50px;top:413.60px;z-index:5;font-family:'Liberation Sans', sans-serif;font-size:12.5px;line-height:12.5px;font-weight:normal;color:#dedede;white-space:pre;letter-spacing:-0.695px">16</div>
<div style="position:absolute;left:134.00px;top:413.60px;width:188.00px;height:17.5px;overflow:hidden;z-index:5"><div style="font-family:'Liberation Sans', sans-serif;font-size:12.5px;line-height:12.5px;font-weight:normal;color:#dedede;white-space:pre;letter-spacing:-0.320px">komplonk@yahoo.com:kucing</div></div>
<div style="position:absolute;left:334.20px;top:413.60px;z-index:5;font-family:'Liberation Sans', sans-serif;font-size:12.5px;line-height:12.5px;font-weight:normal;color:#dedede;white-space:pre;letter-spacing:-0.326px">103.126.238.11:8080</div>
<div style="position:absolute;left:484.40px;top:413.60px;width:204.10px;height:17.5px;overflow:hidden;z-index:5"><div style="font-family:'Liberation Sans', sans-serif;font-size:12.5px;line-height:12.5px;font-weight:normal;color:#dedede;white-space:pre;transform:scaleX(0.8510);transform-origin:0 0">&lt;&lt;&lt; PROCESSING BLOCK: REQUEST &gt;&gt;&gt;</div></div>
<div style="position:absolute;left:93.50px;top:430.60px;z-index:5;font-family:'Liberation Sans', sans-serif;font-size:12.5px;line-height:12.5px;font-weight:normal;color:#dedede;white-space:pre;letter-spacing:-0.695px">17</div>
<div style="position:absolute;left:134.00px;top:430.60px;width:188.00px;height:17.5px;overflow:hidden;z-index:5"><div style="font-family:'Liberation Sans', sans-serif;font-size:12.5px;line-height:12.5px;font-weight:normal;color:#dedede;white-space:pre;letter-spacing:-0.310px">ragavb71@hotmail.com:3whthv</div></div>
<div style="position:absolute;left:334.20px;top:430.60px;z-index:5;font-family:'Liberation Sans', sans-serif;font-size:12.5px;line-height:12.5px;font-weight:normal;color:#dedede;white-space:pre;letter-spacing:-0.327px">201.54.176.13:8080</div>
<div style="position:absolute;left:484.40px;top:430.60px;width:204.10px;height:17.5px;overflow:hidden;z-index:5"><div style="font-family:'Liberation Sans', sans-serif;font-size:12.5px;line-height:12.5px;font-weight:normal;color:#dedede;white-space:pre;transform:scaleX(0.8510);transform-origin:0 0">&lt;&lt;&lt; PROCESSING BLOCK: REQUEST &gt;&gt;&gt;</div></div>
<div style="position:absolute;left:93.50px;top:447.60px;z-index:5;font-family:'Liberation Sans', sans-serif;font-size:12.5px;line-height:12.5px;font-weight:normal;color:#dedede;white-space:pre;letter-spacing:-0.695px">18</div>
<div style="position:absolute;left:134.00px;top:447.60px;width:188.00px;height:17.5px;overflow:hidden;z-index:5"><div style="font-family:'Liberation Sans', sans-serif;font-size:12.5px;line-height:12.5px;font-weight:normal;color:#dedede;white-space:pre;letter-spacing:-0.292px">f.hodgkiss@homecall.co.uk:baby54</div></div>
<div style="position:absolute;left:334.20px;top:447.60px;z-index:5;font-family:'Liberation Sans', sans-serif;font-size:12.5px;line-height:12.5px;font-weight:normal;color:#dedede;white-space:pre;letter-spacing:-0.326px">36.88.113.190:32650</div>
<div style="position:absolute;left:484.40px;top:447.60px;width:204.10px;height:17.5px;overflow:hidden;z-index:5"><div style="font-family:'Liberation Sans', sans-serif;font-size:12.5px;line-height:12.5px;font-weight:normal;color:#dedede;white-space:pre;transform:scaleX(0.8510);transform-origin:0 0">&lt;&lt;&lt; PROCESSING BLOCK: REQUEST &gt;&gt;&gt;</div></div>
<div style="position:absolute;left:93.50px;top:465.60px;z-index:5;font-family:'Liberation Sans', sans-serif;font-size:12.5px;line-height:12.5px;font-weight:normal;color:#dedede;white-space:pre;letter-spacing:-0.695px">19</div>
<div style="position:absolute;left:134.00px;top:465.60px;width:188.00px;height:17.5px;overflow:hidden;z-index:5"><div style="font-family:'Liberation Sans', sans-serif;font-size:12.5px;line-height:12.5px;font-weight:normal;color:#dedede;white-space:pre;letter-spacing:-0.314px">malish1983@msn.com:malishsereg</div></div>
<div style="position:absolute;left:334.20px;top:465.60px;z-index:5;font-family:'Liberation Sans', sans-serif;font-size:12.5px;line-height:12.5px;font-weight:normal;color:#dedede;white-space:pre;letter-spacing:-0.324px">117.74.65.215:8090</div>
<div style="position:absolute;left:484.40px;top:465.60px;width:204.10px;height:17.5px;overflow:hidden;z-index:5"><div style="font-family:'Liberation Sans', sans-serif;font-size:12.5px;line-height:12.5px;font-weight:normal;color:#dedede;white-space:pre;transform:scaleX(0.8510);transform-origin:0 0">&lt;&lt;&lt; PROCESSING BLOCK: REQUEST &gt;&gt;&gt;</div></div>
<div style="position:absolute;left:93.50px;top:482.60px;z-index:5;font-family:'Liberation Sans', sans-serif;font-size:12.5px;line-height:12.5px;font-weight:normal;color:#dedede;white-space:pre;letter-spacing:-0.695px">20</div>
<div style="position:absolute;left:134.00px;top:482.60px;width:188.00px;height:17.5px;overflow:hidden;z-index:5"><div style="font-family:'Liberation Sans', sans-serif;font-size:12.5px;line-height:12.5px;font-weight:normal;color:#dedede;white-space:pre;letter-spacing:-0.282px">whiteboytk@cox.net:kirsten1</div></div>
<div style="position:absolute;left:334.20px;top:482.60px;z-index:5;font-family:'Liberation Sans', sans-serif;font-size:12.5px;line-height:12.5px;font-weight:normal;color:#dedede;white-space:pre;letter-spacing:-0.328px">54.37.156.220:59166</div>
<div style="position:absolute;left:484.40px;top:482.60px;width:204.10px;height:17.5px;overflow:hidden;z-index:5"><div style="font-family:'Liberation Sans', sans-serif;font-size:12.5px;line-height:12.5px;font-weight:normal;color:#dedede;white-space:pre;transform:scaleX(0.8510);transform-origin:0 0">&lt;&lt;&lt; PROCESSING BLOCK: REQUEST &gt;&gt;&gt;</div></div>
<div style="position:absolute;left:93.50px;top:500.60px;z-index:5;font-family:'Liberation Sans', sans-serif;font-size:12.5px;line-height:12.5px;font-weight:normal;color:#dedede;white-space:pre;letter-spacing:-0.695px">21</div>
<div style="position:absolute;left:134.00px;top:500.60px;width:188.00px;height:17.5px;overflow:hidden;z-index:5"><div style="font-family:'Liberation Sans', sans-serif;font-size:12.5px;line-height:12.5px;font-weight:normal;color:#dedede;white-space:pre;letter-spacing:-0.315px">icgdqazm@icgdqazm.jp:698851</div></div>
<div style="position:absolute;left:334.20px;top:500.60px;z-index:5;font-family:'Liberation Sans', sans-serif;font-size:12.5px;line-height:12.5px;font-weight:normal;color:#dedede;white-space:pre;letter-spacing:-0.324px">5.78.44.142:8080</div>
<div style="position:absolute;left:484.40px;top:500.60px;width:204.10px;height:17.5px;overflow:hidden;z-index:5"><div style="font-family:'Liberation Sans', sans-serif;font-size:12.5px;line-height:12.5px;font-weight:normal;color:#dedede;white-space:pre;transform:scaleX(0.8510);transform-origin:0 0">&lt;&lt;&lt; PROCESSING BLOCK: REQUEST &gt;&gt;&gt;</div></div>
<div style="position:absolute;left:93.50px;top:517.60px;z-index:5;font-family:'Liberation Sans', sans-serif;font-size:12.5px;line-height:12.5px;font-weight:normal;color:#dedede;white-space:pre;letter-spacing:-0.695px">22</div>
<div style="position:absolute;left:134.00px;top:517.60px;width:188.00px;height:17.5px;overflow:hidden;z-index:5"><div style="font-family:'Liberation Sans', sans-serif;font-size:12.5px;line-height:12.5px;font-weight:normal;color:#dedede;white-space:pre;letter-spacing:-0.323px">zh357761698@sina.com:zh3830801</div></div>
<div style="position:absolute;left:334.20px;top:517.60px;z-index:5;font-family:'Liberation Sans', sans-serif;font-size:12.5px;line-height:12.5px;font-weight:normal;color:#dedede;white-space:pre;letter-spacing:-0.323px">110.34.3.229:3128</div>
<div style="position:absolute;left:484.40px;top:517.60px;width:204.10px;height:17.5px;overflow:hidden;z-index:5"><div style="font-family:'Liberation Sans', sans-serif;font-size:12.5px;line-height:12.5px;font-weight:normal;color:#dedede;white-space:pre;transform:scaleX(0.8510);transform-origin:0 0">&lt;&lt;&lt; PROCESSING BLOCK: REQUEST &gt;&gt;&gt;</div></div>
<div style="position:absolute;left:93.50px;top:534.60px;z-index:5;font-family:'Liberation Sans', sans-serif;font-size:12.5px;line-height:12.5px;font-weight:normal;color:#dedede;white-space:pre;letter-spacing:-0.695px">23</div>
<div style="position:absolute;left:134.00px;top:534.60px;width:188.00px;height:17.5px;overflow:hidden;z-index:5"><div style="font-family:'Liberation Sans', sans-serif;font-size:12.5px;line-height:12.5px;font-weight:normal;color:#dedede;white-space:pre;letter-spacing:-0.308px">mikys11@yandex.ru:07011982!</div></div>
<div style="position:absolute;left:334.20px;top:534.60px;z-index:5;font-family:'Liberation Sans', sans-serif;font-size:12.5px;line-height:12.5px;font-weight:normal;color:#dedede;white-space:pre;letter-spacing:-0.324px">202.93.114.59:8080</div>
<div style="position:absolute;left:484.40px;top:534.60px;width:204.10px;height:17.5px;overflow:hidden;z-index:5"><div style="font-family:'Liberation Sans', sans-serif;font-size:12.5px;line-height:12.5px;font-weight:normal;color:#dedede;white-space:pre;transform:scaleX(0.8510);transform-origin:0 0">&lt;&lt;&lt; PROCESSING BLOCK: REQUEST &gt;&gt;&gt;</div></div>
<div style="position:absolute;left:93.50px;top:552.60px;z-index:5;font-family:'Liberation Sans', sans-serif;font-size:12.5px;line-height:12.5px;font-weight:normal;color:#dedede;white-space:pre;letter-spacing:-0.695px">24</div>
<div style="position:absolute;left:134.00px;top:552.60px;width:188.00px;height:17.5px;overflow:hidden;z-index:5"><div style="font-family:'Liberation Sans', sans-serif;font-size:12.5px;line-height:12.5px;font-weight:normal;color:#dedede;white-space:pre;letter-spacing:-0.289px">dirtyb66@gmail.com:bizzle66</div></div>
<div style="position:absolute;left:334.20px;top:552.60px;z-index:5;font-family:'Liberation Sans', sans-serif;font-size:12.5px;line-height:12.5px;font-weight:normal;color:#dedede;white-space:pre;letter-spacing:-0.327px">217.76.50.200:8000</div>
<div style="position:absolute;left:484.40px;top:552.60px;width:204.10px;height:17.5px;overflow:hidden;z-index:5"><div style="font-family:'Liberation Sans', sans-serif;font-size:12.5px;line-height:12.5px;font-weight:normal;color:#dedede;white-space:pre;transform:scaleX(0.8510);transform-origin:0 0">&lt;&lt;&lt; PROCESSING BLOCK: REQUEST &gt;&gt;&gt;</div></div>
<div style="position:absolute;left:93.50px;top:569.60px;z-index:5;font-family:'Liberation Sans', sans-serif;font-size:12.5px;line-height:12.5px;font-weight:normal;color:#dedede;white-space:pre;letter-spacing:-0.695px">25</div>
<div style="position:absolute;left:134.00px;top:569.60px;width:188.00px;height:17.5px;overflow:hidden;z-index:5"><div style="font-family:'Liberation Sans', sans-serif;font-size:12.5px;line-height:12.5px;font-weight:normal;color:#dedede;white-space:pre;letter-spacing:-0.316px">rbaron4834@aol.com:cheeba</div></div>
<div style="position:absolute;left:334.20px;top:569.60px;z-index:5;font-family:'Liberation Sans', sans-serif;font-size:12.5px;line-height:12.5px;font-weight:normal;color:#dedede;white-space:pre;letter-spacing:-0.322px">80.80.211.110:8080</div>
<div style="position:absolute;left:484.40px;top:569.60px;width:204.10px;height:17.5px;overflow:hidden;z-index:5"><div style="font-family:'Liberation Sans', sans-serif;font-size:12.5px;line-height:12.5px;font-weight:normal;color:#dedede;white-space:pre;transform:scaleX(0.8510);transform-origin:0 0">&lt;&lt;&lt; PROCESSING BLOCK: REQUEST &gt;&gt;&gt;</div></div>
<div style="position:absolute;left:93.50px;top:587.60px;z-index:5;font-family:'Liberation Sans', sans-serif;font-size:12.5px;line-height:12.5px;font-weight:normal;color:#dedede;white-space:pre;letter-spacing:-0.695px">26</div>
<div style="position:absolute;left:134.00px;top:587.60px;width:188.00px;height:17.5px;overflow:hidden;z-index:5"><div style="font-family:'Liberation Sans', sans-serif;font-size:12.5px;line-height:12.5px;font-weight:normal;color:#dedede;white-space:pre;letter-spacing:-0.312px">cazb1981@hotmail.com:Kyle512049</div></div>
<div style="position:absolute;left:334.20px;top:587.60px;z-index:5;font-family:'Liberation Sans', sans-serif;font-size:12.5px;line-height:12.5px;font-weight:normal;color:#dedede;white-space:pre;letter-spacing:-0.324px">139.59.1.14:3128</div>
<div style="position:absolute;left:484.40px;top:587.60px;width:204.10px;height:17.5px;overflow:hidden;z-index:5"><div style="font-family:'Liberation Sans', sans-serif;font-size:12.5px;line-height:12.5px;font-weight:normal;color:#dedede;white-space:pre;transform:scaleX(0.8510);transform-origin:0 0">&lt;&lt;&lt; PROCESSING BLOCK: REQUEST &gt;&gt;&gt;</div></div>
<div style="position:absolute;left:93.50px;top:604.60px;z-index:5;font-family:'Liberation Sans', sans-serif;font-size:12.5px;line-height:12.5px;font-weight:normal;color:#dedede;white-space:pre;letter-spacing:-0.695px">27</div>
<div style="position:absolute;left:134.00px;top:604.60px;width:188.00px;height:17.5px;overflow:hidden;z-index:5"><div style="font-family:'Liberation Sans', sans-serif;font-size:12.5px;line-height:12.5px;font-weight:normal;color:#dedede;white-space:pre;letter-spacing:-0.318px">hodpunks@hotmail.com:279086</div></div>
<div style="position:absolute;left:334.20px;top:604.60px;z-index:5;font-family:'Liberation Sans', sans-serif;font-size:12.5px;line-height:12.5px;font-weight:normal;color:#dedede;white-space:pre;letter-spacing:-0.318px">121.1.41.162:111</div>
<div style="position:absolute;left:484.40px;top:604.60px;width:204.10px;height:17.5px;overflow:hidden;z-index:5"><div style="font-family:'Liberation Sans', sans-serif;font-size:12.5px;line-height:12.5px;font-weight:normal;color:#dedede;white-space:pre;transform:scaleX(0.8510);transform-origin:0 0">&lt;&lt;&lt; PROCESSING BLOCK: REQUEST &gt;&gt;&gt;</div></div>
<div style="position:absolute;left:93.50px;top:621.60px;z-index:5;font-family:'Liberation Sans', sans-serif;font-size:12.5px;line-height:12.5px;font-weight:normal;color:#dedede;white-space:pre;letter-spacing:-0.695px">28</div>
<div style="position:absolute;left:134.00px;top:621.60px;width:188.00px;height:17.5px;overflow:hidden;z-index:5"><div style="font-family:'Liberation Sans', sans-serif;font-size:12.5px;line-height:12.5px;font-weight:normal;color:#dedede;white-space:pre;letter-spacing:-0.326px">reno1974@msn.com:940327thawat</div></div>
<div style="position:absolute;left:334.20px;top:621.60px;z-index:5;font-family:'Liberation Sans', sans-serif;font-size:12.5px;line-height:12.5px;font-weight:normal;color:#dedede;white-space:pre;letter-spacing:-0.324px">91.238.103.65:80</div>
<div style="position:absolute;left:484.40px;top:621.60px;width:204.10px;height:17.5px;overflow:hidden;z-index:5"><div style="font-family:'Liberation Sans', sans-serif;font-size:12.5px;line-height:12.5px;font-weight:normal;color:#dedede;white-space:pre;transform:scaleX(0.8510);transform-origin:0 0">&lt;&lt;&lt; PROCESSING BLOCK: REQUEST &gt;&gt;&gt;</div></div>
<div style="position:absolute;left:93.50px;top:639.60px;z-index:5;font-family:'Liberation Sans', sans-serif;font-size:12.5px;line-height:12.5px;font-weight:normal;color:#dedede;white-space:pre;letter-spacing:-0.695px">29</div>
<div style="position:absolute;left:134.00px;top:639.60px;width:188.00px;height:17.5px;overflow:hidden;z-index:5"><div style="font-family:'Liberation Sans', sans-serif;font-size:12.5px;line-height:12.5px;font-weight:normal;color:#dedede;white-space:pre;letter-spacing:-0.292px">sarah.walton@outlook.com:yellow77</div></div>
<div style="position:absolute;left:334.20px;top:639.60px;z-index:5;font-family:'Liberation Sans', sans-serif;font-size:12.5px;line-height:12.5px;font-weight:normal;color:#dedede;white-space:pre;letter-spacing:-0.323px">117.74.65.29:9443</div>
<div style="position:absolute;left:484.40px;top:639.60px;width:204.10px;height:17.5px;overflow:hidden;z-index:5"><div style="font-family:'Liberation Sans', sans-serif;font-size:12.5px;line-height:12.5px;font-weight:normal;color:#dedede;white-space:pre;transform:scaleX(0.8510);transform-origin:0 0">&lt;&lt;&lt; PROCESSING BLOCK: REQUEST &gt;&gt;&gt;</div></div>
<div style="position:absolute;left:93.50px;top:656.60px;z-index:5;font-family:'Liberation Sans', sans-serif;font-size:12.5px;line-height:12.5px;font-weight:normal;color:#dedede;white-space:pre;letter-spacing:-0.695px">30</div>
<div style="position:absolute;left:134.00px;top:656.60px;width:188.00px;height:17.5px;overflow:hidden;z-index:5"><div style="font-family:'Liberation Sans', sans-serif;font-size:12.5px;line-height:12.5px;font-weight:normal;color:#dedede;white-space:pre;letter-spacing:-0.309px">onkelblacky@web.de:bunny111</div></div>
<div style="position:absolute;left:334.20px;top:656.60px;z-index:5;font-family:'Liberation Sans', sans-serif;font-size:12.5px;line-height:12.5px;font-weight:normal;color:#dedede;white-space:pre;letter-spacing:-0.323px">116.206.243.50:80</div>
<div style="position:absolute;left:484.40px;top:656.60px;width:204.10px;height:17.5px;overflow:hidden;z-index:5"><div style="font-family:'Liberation Sans', sans-serif;font-size:12.5px;line-height:12.5px;font-weight:normal;color:#dedede;white-space:pre;transform:scaleX(0.8510);transform-origin:0 0">&lt;&lt;&lt; PROCESSING BLOCK: REQUEST &gt;&gt;&gt;</div></div>
<div style="position:absolute;left:101.00px;top:733.32px;z-index:5;font-family:'Liberation Sans', sans-serif;font-size:13px;line-height:13px;font-weight:bold;color:#7a7f82;white-space:pre;letter-spacing:-0.107px">Select CFG</div>
<div style="position:absolute;left:190.30px;top:724.80px;z-index:5;font-family:'Liberation Sans', sans-serif;font-size:12.5px;line-height:12.5px;font-weight:normal;color:#f4f4f4;white-space:pre;letter-spacing:-0.300px">Paramount + capture</div>
<div style="position:absolute;left:403.30px;top:733.32px;z-index:5;font-family:'Liberation Sans', sans-serif;font-size:13px;line-height:13px;font-weight:bold;color:#7a7f82;white-space:pre;letter-spacing:0.057px">Select List</div>
<div style="position:absolute;left:489.30px;top:724.80px;z-index:5;font-family:'Liberation Sans', sans-serif;font-size:12.5px;line-height:12.5px;font-weight:normal;color:#f4f4f4;white-space:pre;letter-spacing:-0.332px">770K USA Mixed Combolist</div>
<div style="position:absolute;left:91.10px;top:789.30px;z-index:5;font-family:'Liberation Mono', monospace;font-size:11px;line-height:11px;font-weight:normal;color:#e8e8e8;white-space:pre;letter-spacing:-0.031px;-webkit-text-stroke:0.15px #e8e8e8">Runner initialized succesfully!</div>
<div style="position:absolute;left:91.10px;top:803.40px;z-index:5;font-family:'Liberation Mono', monospace;font-size:11px;line-height:11px;font-weight:normal;color:#adff2f;white-space:pre;-webkit-text-stroke:0.15px #adff2f">Started Running Config Paramount + capture with Wordlist 770K USA Mixed Combolist at</div>
<div style="position:absolute;left:91.10px;top:817.40px;z-index:5;font-family:'Liberation Mono', monospace;font-size:11px;line-height:11px;font-weight:normal;color:#adff2f;white-space:pre;-webkit-text-stroke:0.15px #adff2f">3/30/2023 12:09:28 AM.</div>
<div style="position:absolute;left:126.20px;top:847.52px;z-index:5;font-family:'Liberation Sans', sans-serif;font-size:13px;line-height:13px;font-weight:bold;color:#f4f6f6;white-space:pre;letter-spacing:-0.159px">Back</div>
<div style="position:absolute;left:702.50px;top:133.48px;z-index:5;font-family:'Liberation Sans', sans-serif;font-size:14.5px;line-height:14.5px;font-weight:normal;color:#ececec;white-space:pre;letter-spacing:-0.496px">Time</div>
<div style="position:absolute;left:743.40px;top:133.48px;z-index:5;font-family:'Liberation Sans', sans-serif;font-size:14.5px;line-height:14.5px;font-weight:normal;color:#ececec;white-space:pre;letter-spacing:1.086px">Data</div>
<div style="position:absolute;left:788.00px;top:133.48px;z-index:5;font-family:'Liberation Sans', sans-serif;font-size:14.5px;line-height:14.5px;font-weight:normal;color:#ececec;white-space:pre;letter-spacing:-0.645px">Proxy</div>
<div style="position:absolute;left:833.30px;top:133.48px;z-index:5;font-family:'Liberation Sans', sans-serif;font-size:14.5px;line-height:14.5px;font-weight:normal;color:#ececec;white-space:pre;letter-spacing:-0.046px">Type</div>
<div style="position:absolute;left:875.80px;top:133.48px;z-index:5;font-family:'Liberation Sans', sans-serif;font-size:14.5px;line-height:14.5px;font-weight:normal;color:#ececec;white-space:pre;letter-spacing:0.851px">Capture</div>
<div style="position:absolute;left:710.85px;top:688.52px;z-index:5;font-family:'Liberation Sans', sans-serif;font-size:13px;line-height:13px;font-weight:bold;color:#f4f6f6;white-space:pre;letter-spacing:0.246px">Hits</div>
<div style="position:absolute;left:768.35px;top:688.52px;z-index:5;font-family:'Liberation Sans', sans-serif;font-size:13px;line-height:13px;font-weight:bold;color:#f4f6f6;white-space:pre;letter-spacing:-0.018px">Custom</div>
<div style="position:absolute;left:849.25px;top:688.52px;z-index:5;font-family:'Liberation Sans', sans-serif;font-size:13px;line-height:13px;font-weight:bold;color:#f4f6f6;white-space:pre;letter-spacing:-0.073px">ToCheck</div>
<div style="position:absolute;left:934.85px;top:688.52px;z-index:5;font-family:'Liberation Sans', sans-serif;font-size:13px;line-height:13px;font-weight:bold;color:#f4f6f6;white-space:pre;letter-spacing:0.056px">Ram</div>
<div style="position:absolute;left:983.10px;top:677.08px;z-index:5;font-family:'Liberation Sans', sans-serif;font-size:12px;line-height:12px;font-weight:normal;color:#f0f0f0;white-space:pre">0</div>
<div style="position:absolute;left:995.90px;top:677.08px;z-index:5;font-family:'Liberation Sans', sans-serif;font-size:12px;line-height:12px;font-weight:normal;color:#f0f0f0;white-space:pre;letter-spacing:-0.353px">days</div>
<div style="position:absolute;left:1026.60px;top:677.08px;z-index:5;font-family:'Liberation Sans', sans-serif;font-size:12px;line-height:12px;font-weight:normal;color:#f0f0f0;white-space:pre;letter-spacing:-0.559px">00</div>
<div style="position:absolute;left:1045.80px;top:677.08px;z-index:5;font-family:'Liberation Sans', sans-serif;font-size:12px;line-height:12px;font-weight:normal;color:#f0f0f0;white-space:pre">:</div>
<div style="position:absolute;left:1055.60px;top:677.08px;z-index:5;font-family:'Liberation Sans', sans-serif;font-size:12px;line-height:12px;font-weight:normal;color:#f0f0f0;white-space:pre;letter-spacing:-1.159px">03</div>
<div style="position:absolute;left:1074.80px;top:677.08px;z-index:5;font-family:'Liberation Sans', sans-serif;font-size:12px;line-height:12px;font-weight:normal;color:#f0f0f0;white-space:pre">:</div>
<div style="position:absolute;left:1083.50px;top:677.08px;z-index:5;font-family:'Liberation Sans', sans-serif;font-size:12px;line-height:12px;font-weight:normal;color:#f0f0f0;white-space:pre;letter-spacing:-0.659px">47</div>
<div style="position:absolute;left:984.30px;top:694.78px;z-index:5;font-family:'Liberation Sans', sans-serif;font-size:12px;line-height:12px;font-weight:normal;color:#f0f0f0;white-space:pre;letter-spacing:0.204px">+inf</div>
<div style="position:absolute;left:700.40px;top:726.16px;z-index:5;font-family:'Liberation Sans', sans-serif;font-size:11.5px;line-height:11.5px;font-weight:bold;color:#e6e6e6;white-space:pre;letter-spacing:-0.211px">DATA</div>
<div style="position:absolute;left:700.40px;top:744.60px;z-index:5;font-family:'Liberation Sans', sans-serif;font-size:12.5px;line-height:12.5px;font-weight:normal;color:#dcdcdc;white-space:pre">Total:</div>
<div style="position:absolute;left:739.50px;top:744.60px;z-index:5;font-family:'Liberation Sans', sans-serif;font-size:12.5px;line-height:12.5px;font-weight:normal;color:#dcdcdc;white-space:pre">3</div>
<div style="position:absolute;left:700.40px;top:762.60px;z-index:5;font-family:'Liberation Sans', sans-serif;font-size:12.5px;line-height:12.5px;font-weight:normal;color:#84f51f;white-space:pre">Hits:</div>
<div style="position:absolute;left:734.60px;top:762.60px;z-index:5;font-family:'Liberation Sans', sans-serif;font-size:12.5px;line-height:12.5px;font-weight:normal;color:#84f51f;white-space:pre">0</div>
<div style="position:absolute;left:700.40px;top:781.60px;z-index:5;font-family:'Liberation Sans', sans-serif;font-size:12.5px;line-height:12.5px;font-weight:normal;color:#ff7d24;white-space:pre">Custom:</div>
<div style="position:absolute;left:755.00px;top:781.60px;z-index:5;font-family:'Liberation Sans', sans-serif;font-size:12.5px;line-height:12.5px;font-weight:normal;color:#ff7d24;white-space:pre">0</div>
<div style="position:absolute;left:700.40px;top:799.60px;z-index:5;font-family:'Liberation Sans', sans-serif;font-size:12.5px;line-height:12.5px;font-weight:normal;color:#ff6347;white-space:pre">Bad:</div>
<div style="position:absolute;left:733.70px;top:799.60px;z-index:5;font-family:'Liberation Sans', sans-serif;font-size:12.5px;line-height:12.5px;font-weight:normal;color:#ff6347;white-space:pre">3</div>
<div style="position:absolute;left:700.40px;top:817.60px;z-index:5;font-family:'Liberation Sans', sans-serif;font-size:12.5px;line-height:12.5px;font-weight:normal;color:#ffff00;white-space:pre">Retries:</div>
<div style="position:absolute;left:750.60px;top:817.60px;z-index:5;font-family:'Liberation Sans', sans-serif;font-size:12.5px;line-height:12.5px;font-weight:normal;color:#ffff00;white-space:pre">539</div>
<div style="position:absolute;left:700.40px;top:836.60px;z-index:5;font-family:'Liberation Sans', sans-serif;font-size:12.5px;line-height:12.5px;font-weight:normal;color:#7fffd4;white-space:pre">To Check:</div>
<div style="position:absolute;left:762.60px;top:836.60px;z-index:5;font-family:'Liberation Sans', sans-serif;font-size:12.5px;line-height:12.5px;font-weight:normal;color:#7fffd4;white-space:pre">0</div>
<div style="position:absolute;left:948.40px;top:726.16px;z-index:5;font-family:'Liberation Sans', sans-serif;font-size:11.5px;line-height:11.5px;font-weight:bold;color:#e6e6e6;white-space:pre;letter-spacing:-0.407px">PROXIES</div>
<div style="position:absolute;left:948.40px;top:744.60px;z-index:5;font-family:'Liberation Sans', sans-serif;font-size:12.5px;line-height:12.5px;font-weight:normal;color:#e6e6e6;white-space:pre">Total:</div>
<div style="position:absolute;left:987.90px;top:744.60px;z-index:5;font-family:'Liberation Sans', sans-serif;font-size:12.5px;line-height:12.5px;font-weight:normal;color:#e6e6e6;white-space:pre">439</div>
<div style="position:absolute;left:948.40px;top:762.60px;z-index:5;font-family:'Liberation Sans', sans-serif;font-size:12.5px;line-height:12.5px;font-weight:normal;color:#e6e6e6;white-space:pre">Alive:</div>
<div style="position:absolute;left:987.30px;top:762.60px;z-index:5;font-family:'Liberation Sans', sans-serif;font-size:12.5px;line-height:12.5px;font-weight:normal;color:#e6e6e6;white-space:pre">335</div>
<div style="position:absolute;left:948.40px;top:781.60px;z-index:5;font-family:'Liberation Sans', sans-serif;font-size:12.5px;line-height:12.5px;font-weight:normal;color:#e6e6e6;white-space:pre">Banned:</div>
<div style="position:absolute;left:1001.80px;top:781.60px;z-index:5;font-family:'Liberation Sans', sans-serif;font-size:12.5px;line-height:12.5px;font-weight:normal;color:#e6e6e6;white-space:pre">5</div>
<div style="position:absolute;left:948.40px;top:799.60px;z-index:5;font-family:'Liberation Sans', sans-serif;font-size:12.5px;line-height:12.5px;font-weight:normal;color:#e6e6e6;white-space:pre">Bad:</div>
<div style="position:absolute;left:982.20px;top:799.60px;z-index:5;font-family:'Liberation Sans', sans-serif;font-size:12.5px;line-height:12.5px;font-weight:normal;color:#e6e6e6;white-space:pre">99</div>
<div style="position:absolute;left:948.40px;top:817.68px;z-index:5;font-family:'Liberation Sans', sans-serif;font-size:12px;line-height:12px;font-weight:bold;color:#e6e6e6;white-space:pre">CPM:</div>
<div style="position:absolute;left:987.60px;top:817.68px;z-index:5;font-family:'Liberation Sans', sans-serif;font-size:12px;line-height:12px;font-weight:bold;color:#e6e6e6;white-space:pre">0</div>
<div style="position:absolute;left:948.40px;top:836.68px;z-index:5;font-family:'Liberation Sans', sans-serif;font-size:12px;line-height:12px;font-weight:bold;color:#e6e6e6;white-space:pre">Credit:</div>
<div style="position:absolute;left:994.50px;top:836.68px;z-index:5;font-family:'Liberation Sans', sans-serif;font-size:12px;line-height:12px;font-weight:bold;color:#e6e6e6;white-space:pre">$0</div>
<div style="position:absolute;left:16.00px;top:907.36px;z-index:2;font-family:'Liberation Sans', sans-serif;font-size:14px;line-height:14px;font-weight:normal;color:#6d6f78;white-space:pre;letter-spacing:-0.811px">Message #</div>
<div style="position:absolute;left:117.00px;top:907.36px;z-index:2;font-family:'Liberation Sans', sans-serif;font-size:14px;line-height:14px;font-weight:normal;color:#6d6f78;white-space:pre">Chat</div>
</body></html>
